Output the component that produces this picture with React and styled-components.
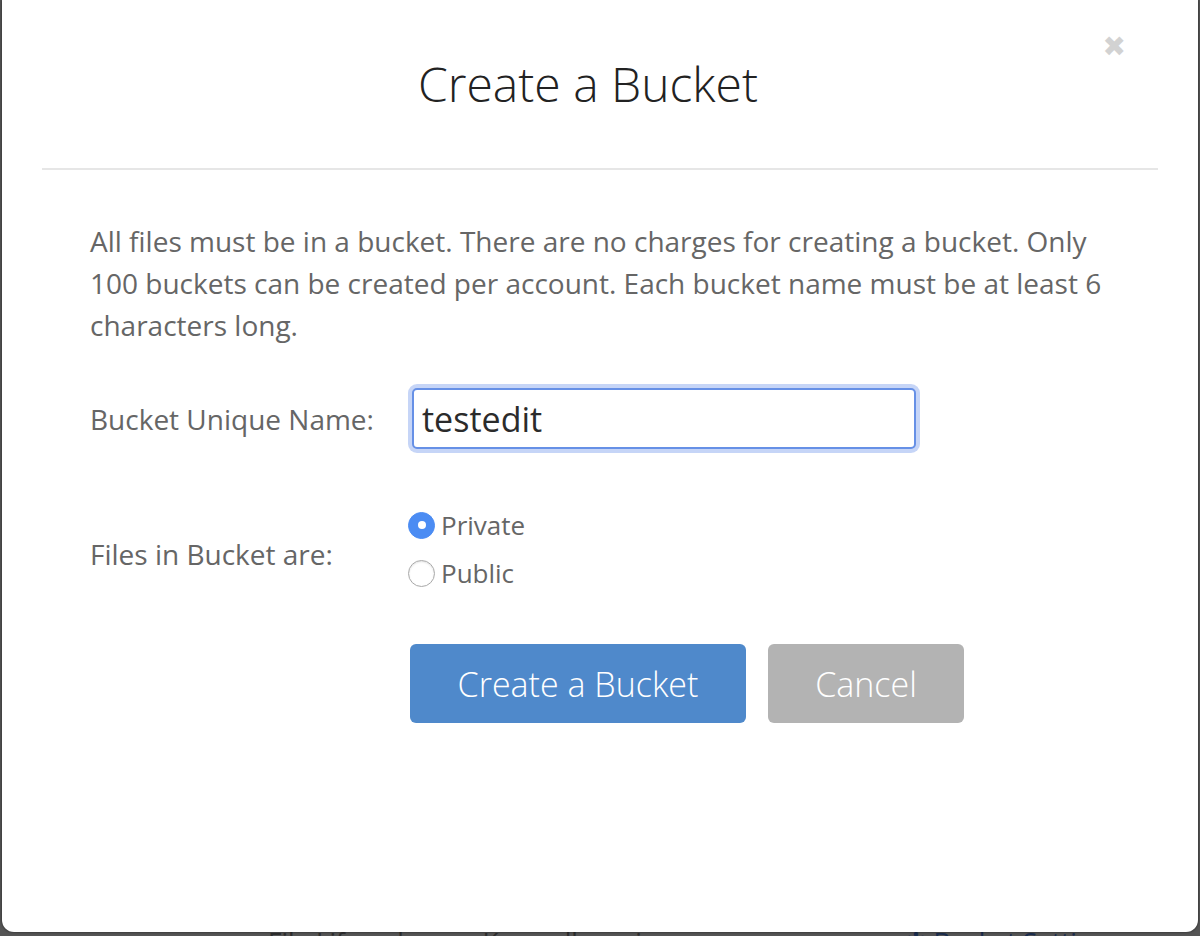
import styled, { createGlobalStyle } from "styled-components";

const GlobalStyle = createGlobalStyle`
  html, body {
    margin: 0;
    padding: 0;
    background: #555555;
    font-family: "Open Sans", "Liberation Sans", sans-serif;
  }
  * {
    box-sizing: border-box;
  }
`;

const Screen = styled.div`
  height: 936px;
  overflow: hidden;
  display: flex;
  flex-direction: column;
  padding: 0 2px;
`;

const Modal = styled.div`
  flex: 0 0 932px;
  background: #fff;
  border-radius: 0 0 12px 12px;
  box-shadow: 0 0 3px rgba(0, 0, 0, 0.6);
  padding: 0 40px;
  position: relative;
`;

const Header = styled.div`
  height: 170px;
  border-bottom: 2px solid #e6e6e6;
  display: flex;
  align-items: center;
  justify-content: center;
  padding: 0 24px 2px 0;
`;

const Title = styled.h1`
  margin: 0;
  font-size: 48px;
  font-weight: 300;
  color: #222;
`;

const Close = styled.button`
  position: absolute;
  top: 30px;
  right: 72px;
  border: none;
  background: none;
  padding: 0;
  color: #d2d2d2;
  font-family: "DejaVu Sans", sans-serif;
  font-weight: 700;
  font-size: 28px;
  line-height: 34px;
  cursor: pointer;
`;

const Body = styled.div`
  padding: 50px 48px 0;
`;

const Intro = styled.p`
  margin: 0;
  font-size: 28px;
  line-height: 42px;
  color: #666;
`;

const Form = styled.div`
  display: grid;
  grid-template-columns: 318px 1fr;
  align-items: center;
  margin-top: 42px;
`;

const Label = styled.label`
  font-size: 28px;
  color: #666;
  padding-top: ${(p) => p.$shift || 0}px;
`;

const Input = styled.input`
  width: 504px;
  height: 61px;
  margin-left: 4px;
  border: 2px solid #6690e6;
  border-radius: 5px;
  box-shadow: 0 0 0 4px rgba(112, 150, 235, 0.4);
  padding: 0 8px;
  font-family: "Open Sans", "Liberation Sans", sans-serif;
  font-size: 34px;
  color: #2b2b2b;
  outline: none;
`;

const RadioGroup = styled.div`
  display: flex;
  flex-direction: column;
  margin-top: 52px;
`;

const Option = styled.label`
  display: flex;
  align-items: center;
  gap: 6px;
  height: 48px;
  font-size: 26px;
  color: #666;
`;

const Dot = styled.span`
  width: 27px;
  height: 27px;
  border-radius: 50%;
  flex: none;
  display: flex;
  align-items: center;
  justify-content: center;
  background: ${(p) => (p.$checked ? "#4b8cf3" : "#fff")};
  border: 1px solid ${(p) => (p.$checked ? "#4b8cf3" : "#a9a9a9")};
  box-shadow: ${(p) => (p.$checked ? "none" : "inset 0 1px 2px rgba(0,0,0,0.12)")};
  &::after {
    content: "";
    display: ${(p) => (p.$checked ? "block" : "none")};
    width: 8px;
    height: 8px;
    border-radius: 50%;
    background: #fff;
  }
`;

const Actions = styled.div`
  grid-column: 2;
  display: flex;
  gap: 22px;
  margin-top: 47px;
  padding-left: 2px;
`;

const Button = styled.button`
  height: 79px;
  width: ${(p) => p.$w}px;
  border: none;
  border-radius: 6px;
  background: ${(p) => p.$bg};
  color: #fff;
  font-family: "Open Sans", "Liberation Sans", sans-serif;
  font-size: 34px;
  font-weight: 300;
  cursor: pointer;
`;

const Behind = styled.div`
  display: flex;
  font-size: 26px;
  line-height: 18px;
  color: #2e2e2e;
  white-space: nowrap;
`;

const BehindItem = styled.span`
  margin-left: ${(p) => p.$ml}px;
  color: ${(p) => p.$color || "inherit"};
`;

export default function App() {
  return (
    <>
      <GlobalStyle />
      <Screen>
        <Modal>
          <Header>
            <Title>Create a Bucket</Title>
          </Header>
          <Close aria-label="Close">✖</Close>
          <Body>
            <Intro>
              All files must be in a bucket. There are no charges for creating a bucket. Only 100
              buckets can be created per account. Each bucket name must be at least 6 characters
              long.
            </Intro>
            <Form>
              <Label>Bucket Unique Name:</Label>
              <Input defaultValue="testedit" />
              <Label $shift={62}>Files in Bucket are:</Label>
              <RadioGroup>
                <Option>
                  <Dot $checked />
                  Private
                </Option>
                <Option>
                  <Dot />
                  Public
                </Option>
              </RadioGroup>
              <Actions>
                <Button $w={336} $bg="#4f89cb">Create a Bucket</Button>
                <Button $w={196} $bg="#b3b3b3">Cancel</Button>
              </Actions>
            </Form>
          </Body>
        </Modal>
        <Behind>
          <BehindItem $ml={266}>File Lifecycle</BehindItem>
          <BehindItem $ml={64}>Keep all versions</BehindItem>
          <BehindItem $ml={219} $color="#1b2d4f">✻ Bucket Settings</BehindItem>
        </Behind>
      </Screen>
    </>
  );
}
